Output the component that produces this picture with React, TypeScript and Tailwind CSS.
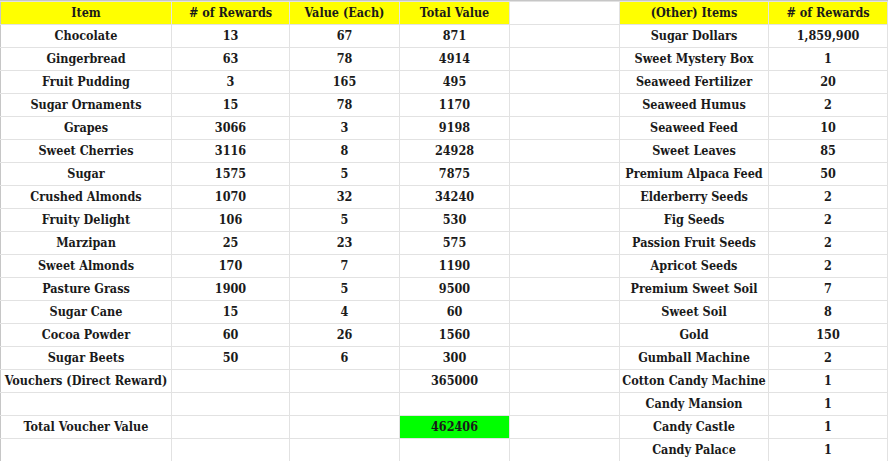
import React from "react";

type Row = [string, string, string, string];

const leftRows: Row[] = [
  ["Chocolate", "13", "67", "871"],
  ["Gingerbread", "63", "78", "4914"],
  ["Fruit Pudding", "3", "165", "495"],
  ["Sugar Ornaments", "15", "78", "1170"],
  ["Grapes", "3066", "3", "9198"],
  ["Sweet Cherries", "3116", "8", "24928"],
  ["Sugar", "1575", "5", "7875"],
  ["Crushed Almonds", "1070", "32", "34240"],
  ["Fruity Delight", "106", "5", "530"],
  ["Marzipan", "25", "23", "575"],
  ["Sweet Almonds", "170", "7", "1190"],
  ["Pasture Grass", "1900", "5", "9500"],
  ["Sugar Cane", "15", "4", "60"],
  ["Cocoa Powder", "60", "26", "1560"],
  ["Sugar Beets", "50", "6", "300"],
  ["Vouchers (Direct Reward)", "", "", "365000"],
  ["", "", "", ""],
  ["Total Voucher Value", "", "", "462406"],
  ["", "", "", ""],
];

const rightRows: [string, string][] = [
  ["Sugar Dollars", "1,859,900"],
  ["Sweet Mystery Box", "1"],
  ["Seaweed Fertilizer", "20"],
  ["Seaweed Humus", "2"],
  ["Seaweed Feed", "10"],
  ["Sweet Leaves", "85"],
  ["Premium Alpaca Feed", "50"],
  ["Elderberry Seeds", "2"],
  ["Fig Seeds", "2"],
  ["Passion Fruit Seeds", "2"],
  ["Apricot Seeds", "2"],
  ["Premium Sweet Soil", "7"],
  ["Sweet Soil", "8"],
  ["Gold", "150"],
  ["Gumball Machine", "2"],
  ["Cotton Candy Machine", "1"],
  ["Candy Mansion", "1"],
  ["Candy Castle", "1"],
  ["Candy Palace", "1"],
];

const cell = "h-[23px] border border-[#e2e2e2] text-center align-middle p-0 pt-px whitespace-nowrap";

export default function App() {
  return (
    <div className="w-[888px] h-[461px] bg-white overflow-hidden border-t border-[#c6c6c6]">
      <table
        className="border-collapse table-fixed text-[12.5px] font-bold text-[#1a1a1a] leading-none"
        style={{ fontFamily: '"DejaVu Serif Condensed", "DejaVu Serif", serif' }}
      >
        <colgroup>
          <col className="w-[171px]" />
          <col className="w-[118px]" />
          <col className="w-[110px]" />
          <col className="w-[110px]" />
          <col className="w-[110px]" />
          <col className="w-[149px]" />
          <col className="w-[119px]" />
        </colgroup>
        <tbody>
          <tr>
            <td className={`${cell} bg-[#ffff00] border-l-[#c6c6c6]`}>Item</td>
            <td className={`${cell} bg-[#ffff00]`}># of Rewards</td>
            <td className={`${cell} bg-[#ffff00]`}>Value (Each)</td>
            <td className={`${cell} bg-[#ffff00]`}>Total Value</td>
            <td className={cell}></td>
            <td className={`${cell} bg-[#ffff00]`}>(Other) Items</td>
            <td className={`${cell} bg-[#ffff00]`}># of Rewards</td>
          </tr>
          {leftRows.map((r, i) => (
            <tr key={i}>
              <td className={`${cell} border-l-[#c6c6c6]`}>{r[0]}</td>
              <td className={cell}>{r[1]}</td>
              <td className={cell}>{r[2]}</td>
              <td className={`${cell} ${i === 17 ? "bg-[#00ff00]" : ""}`}>{r[3]}</td>
              <td className={cell}></td>
              <td className={cell}>{rightRows[i][0]}</td>
              <td className={cell}>{rightRows[i][1]}</td>
            </tr>
          ))}
        </tbody>
      </table>
    </div>
  );
}
